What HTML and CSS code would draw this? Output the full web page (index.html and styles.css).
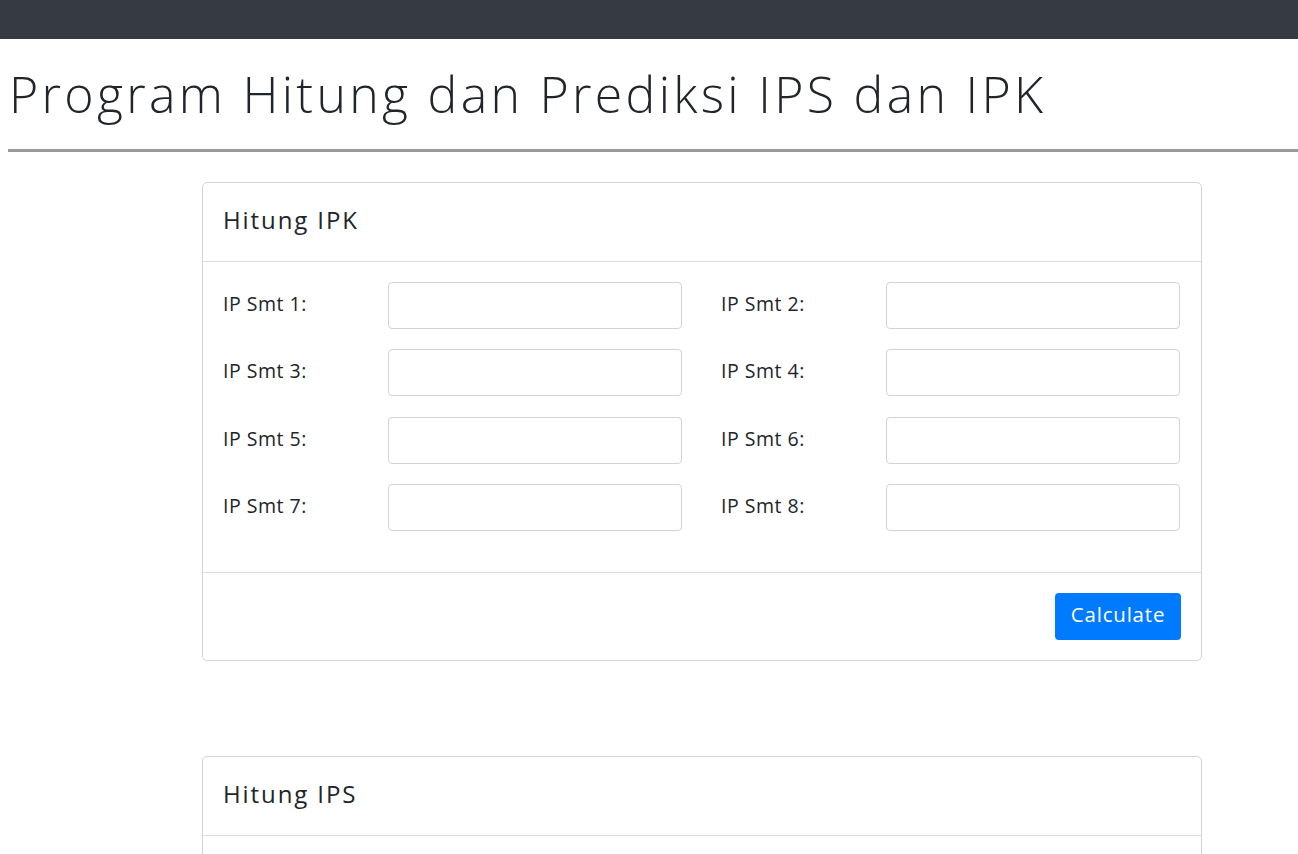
FILE: index.html
```html
<!DOCTYPE html>
<html lang="id">
<head>
<meta charset="utf-8">
<title>Program Hitung dan Prediksi IPS dan IPK</title>
<link rel="stylesheet" href="styles.css">
</head>
<body>
<div class="topbar"></div>
<main class="page">
  <h1 class="title">Program Hitung dan Prediksi IPS dan IPK</h1>
  <hr class="rule">
  <section class="card">
    <div class="card-header">Hitung IPK</div>
    <div class="card-body">
      <div class="grid">
        <label class="field"><span class="lbl">IP Smt 1:</span><input type="text" class="inp"></label>
        <label class="field"><span class="lbl">IP Smt 2:</span><input type="text" class="inp"></label>
        <label class="field"><span class="lbl">IP Smt 3:</span><input type="text" class="inp"></label>
        <label class="field"><span class="lbl">IP Smt 4:</span><input type="text" class="inp"></label>
        <label class="field"><span class="lbl">IP Smt 5:</span><input type="text" class="inp"></label>
        <label class="field"><span class="lbl">IP Smt 6:</span><input type="text" class="inp"></label>
        <label class="field"><span class="lbl">IP Smt 7:</span><input type="text" class="inp"></label>
        <label class="field"><span class="lbl">IP Smt 8:</span><input type="text" class="inp"></label>
      </div>
    </div>
    <div class="card-footer"><button class="btn" type="button">Calculate</button></div>
  </section>
  <section class="card card-second">
    <div class="card-header">Hitung IPS</div>
    <div class="card-body"></div>
  </section>
</main>
</body>
</html>
```
FILE: styles.css
```css
html, body {
  margin: 0;
  padding: 0;
  background: #fff;
}
body {
  font-family: "Open Sans", "DejaVu Sans", sans-serif;
  color: #212529;
  overflow: hidden;
}
.topbar {
  height: 39px;
  background: #363a43;
}
.page {
  padding: 0 0 0 8px;
}
.title {
  margin: 0;
  padding: 24px 0 0 1px;
  font-family: "Open Sans", sans-serif;
  font-weight: 300;
  font-size: 50px;
  line-height: 62px;
  color: #212529;
  letter-spacing: 3.3px;
  white-space: nowrap;
}
.rule {
  margin: 24px 0 0 0;
  border: 0;
  height: 3px;
  background: #9a9a9a;
  width: 1300px;
}
.card {
  width: 998px;
  margin: 30px 0 0 194px;
  border: 1px solid #d4d4d8;
  border-radius: 5px;
}
.card-second {
  margin-top: 95px;
}
.card-header {
  height: 79px;
  box-sizing: border-box;
  padding: 0 20px 5px 20px;
  display: flex;
  align-items: center;
  font-family: "Open Sans", sans-serif;
  font-size: 24px;
  letter-spacing: 1.9px;
  border-bottom: 1px solid #dedee2;
}
.card-body {
  padding: 20px 20px 41px 20px;
}
.card-second .card-body {
  padding: 0;
  height: 40px;
}
.grid {
  display: grid;
  grid-template-columns: 459px 459px;
  column-gap: 39px;
  row-gap: 20.33px;
}
.field {
  display: flex;
  align-items: center;
  height: 47px;
}
.lbl {
  width: 165px;
  flex: none;
  padding-bottom: 4px;
  font-family: "Open Sans", sans-serif;
  font-size: 19.5px;
  letter-spacing: 0.5px;
  color: #212529;
}
.inp {
  width: 295px;
  height: 47px;
  box-sizing: border-box;
  border: 1px solid #ced4da;
  border-radius: 4px;
  padding: 6px 12px;
  font-size: 18px;
  outline: none;
}
.card-footer {
  border-top: 1px solid #dedee2;
  padding: 20px;
  display: flex;
  justify-content: flex-end;
}
.btn {
  width: 126px;
  height: 47px;
  padding: 0 0 4px 0;
  background: #007bff;
  border: 0;
  border-radius: 4px;
  color: #fff;
  font-family: "Open Sans", sans-serif;
  font-size: 20.5px;
  letter-spacing: 0.8px;
  cursor: pointer;
}
```
